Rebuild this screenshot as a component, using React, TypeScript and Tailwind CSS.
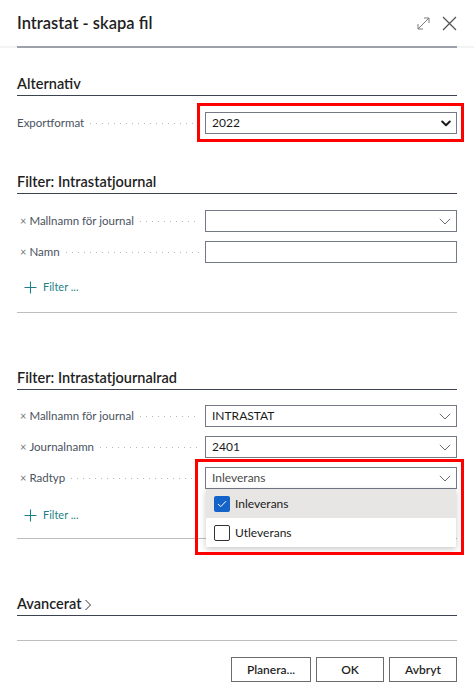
import { ReactNode } from 'react';

const FONT = 'font-["Lato","Noto_Sans",sans-serif]';

function Chevron({ bold = false }: { bold?: boolean }) {
  if (bold) {
    return (
      <svg width="10" height="7" viewBox="0 0 10 7" className="text-[#1b1b1b]">
        <path d="M1.2 1.5 L5 5.2 L8.8 1.5" fill="none" stroke="currentColor" strokeWidth="2" strokeLinecap="round" strokeLinejoin="round" />
      </svg>
    );
  }
  return (
    <svg width="12" height="7" viewBox="0 0 12 7" className="text-[#6b6b6b]">
      <path d="M0.8 0.8 L6 6 L11.2 0.8" fill="none" stroke="currentColor" strokeWidth="1" />
    </svg>
  );
}

function Leader() {
  return <span className="mx-[6px] h-[1px] flex-1 bg-[linear-gradient(to_right,#b8b8b8_1px,transparent_1px)] bg-[length:6px_1px] bg-repeat-x" />;
}

function SectionHeading({ children, className = '' }: { children: ReactNode; className?: string }) {
  return (
    <div className={`flex h-[23px] items-start border-b border-[#3b4250] pt-[1px] text-[14.5px] font-semibold leading-[20px] text-[#1f1f1f] ${className}`}>
      {children}
    </div>
  );
}

function Field({
  label,
  removable = true,
  value,
  select = true,
  bold = false,
  muted = false,
  children,
}: {
  label: string;
  removable?: boolean;
  value?: string;
  select?: boolean;
  bold?: boolean;
  muted?: boolean;
  children?: ReactNode;
}) {
  return (
    <div className="flex h-[22px] items-center">
      <div className="flex w-[188px] items-center text-[11.5px] text-[#4a5260]">
        {removable && <span className="mr-[3px] ml-[3px] text-[11px] text-[#777]">×</span>}
        <span className="whitespace-nowrap">{label}</span>
        <Leader />
      </div>
      <div className="relative flex h-[22px] flex-1 items-center border border-[#737a86] bg-white pr-[5px] pl-[6px]">
        <span className={`flex-1 text-[12px] ${muted ? 'text-[#4a4a4a]' : 'text-[#1b1b1b]'}`}>{value}</span>
        {select && <Chevron bold={bold} />}
        {children}
      </div>
    </div>
  );
}

function AddFilter({ className = '' }: { className?: string }) {
  return (
    <div className={`flex h-[20px] items-center pl-[7px] text-[11px] text-[#1f7f86] ${className}`}>
      <svg width="13" height="13" viewBox="0 0 13 13" className="mr-[6px]">
        <path d="M6.5 0.5 V12.5 M0.5 6.5 H12.5" stroke="#1f7f86" strokeWidth="1.1" />
      </svg>
      Filter ...
    </div>
  );
}

export default function App() {
  return (
    <div className={`${FONT} h-[697px] w-[474px] bg-white`}>
      <div className="flex h-[46px] items-center px-[17px]">
        <h1 className="flex-1 text-[16.5px] font-semibold text-[#1f1f1f]">Intrastat - skapa fil</h1>
        <svg width="13" height="13" viewBox="0 0 13 13" className="mr-[12px] text-[#7a7a7a]">
          <path d="M1 12 L12 1 M7 1 H12 V6 M1 7 V12 H6" fill="none" stroke="currentColor" strokeWidth="1" />
        </svg>
        <svg width="15" height="15" viewBox="0 0 15 15" className="text-[#555]">
          <path d="M1 1 L14 14 M14 1 L1 14" stroke="currentColor" strokeWidth="1.3" />
        </svg>
      </div>
      <div className="h-[2px] bg-[#f3f3f3] px-[17px]">
        <div className="h-[2px] bg-[#9ba0a9]" />
      </div>

      <div className="px-[17px]">
        <SectionHeading className="mt-[25px]">Alternativ</SectionHeading>
        <div className="mt-[16px]">
          <Field label="Exportformat" removable={false} value="2022" bold>
            <div className="pointer-events-none absolute top-[-10px] right-[-8px] bottom-[-9px] left-[-9px] border-[3px] border-[#ff0000]" />
          </Field>
        </div>

        <SectionHeading className="mt-[37px]">Filter: Intrastatjournal</SectionHeading>
        <div className="mt-[16px] flex flex-col gap-[9px]">
          <Field label="Mallnamn för journal" value="" />
          <Field label="Namn" select={false} />
        </div>
        <AddFilter className="mt-[14px]" />
        <div className="mt-[15px] h-[1px] bg-[#bdbdbd]" />

        <SectionHeading className="mt-[54px]">Filter: Intrastatjournalrad</SectionHeading>
        <div className="mt-[15px] flex flex-col gap-[9px]">
          <Field label="Mallnamn för journal" value="INTRASTAT" />
          <Field label="Journalnamn" value="2401" />
          <Field label="Radtyp" value="Inleverans" muted>
            <div className="absolute top-[21px] right-[0px] left-[0px] z-10 bg-white shadow-[0_2px_6px_rgba(0,0,0,0.22)]">
              <div className="flex h-[29px] items-center bg-[#e8e6e4] pl-[8px] text-[12px] text-[#1b1b1b]">
                <span className="mr-[5px] flex h-[16px] w-[16px] items-center justify-center rounded-[2px] bg-[#1463c8]">
                  <svg width="10" height="8" viewBox="0 0 10 8">
                    <path d="M1 4 L3.8 6.6 L9 1.2" fill="none" stroke="white" strokeWidth="1" />
                  </svg>
                </span>
                Inleverans
              </div>
              <div className="flex h-[29px] items-center pl-[8px] text-[12px] text-[#1b1b1b]">
                <span className="mr-[5px] h-[16px] w-[16px] rounded-[2px] border border-[#333]" />
                Utleverans
              </div>
            </div>
            <div className="pointer-events-none absolute top-[-9px] right-[-8px] bottom-[-67px] left-[-11px] z-20 border-[3px] border-[#ff0000]" />
          </Field>
        </div>
        <AddFilter className="mt-[16px]" />
        <div className="mt-[13px] h-[1px] bg-[#bdbdbd]" />

        <SectionHeading className="mt-[54px]">
          Avancerat
          <svg width="8" height="12" viewBox="0 0 8 12" className="mt-[5px] ml-[3px] text-[#333]">
            <path d="M1.5 1 L6.5 6 L1.5 11" fill="none" stroke="currentColor" strokeWidth="1" />
          </svg>
        </SectionHeading>
        <div className="mt-[24px] h-[1px] bg-[#bdbdbd]" />

        <div className="mt-[16px] flex justify-end gap-[5px]">
          <button className="h-[25px] w-[80px] border border-[#6b6b6b] bg-white text-[12px] font-semibold text-[#1f1f1f]">Planera...</button>
          <button className="h-[25px] w-[68px] border border-[#6b6b6b] bg-white text-[12px] font-semibold text-[#1f1f1f]">OK</button>
          <button className="h-[25px] w-[68px] border border-[#6b6b6b] bg-white text-[12px] font-semibold text-[#1f1f1f]">Avbryt</button>
        </div>
      </div>
    </div>
  );
}
